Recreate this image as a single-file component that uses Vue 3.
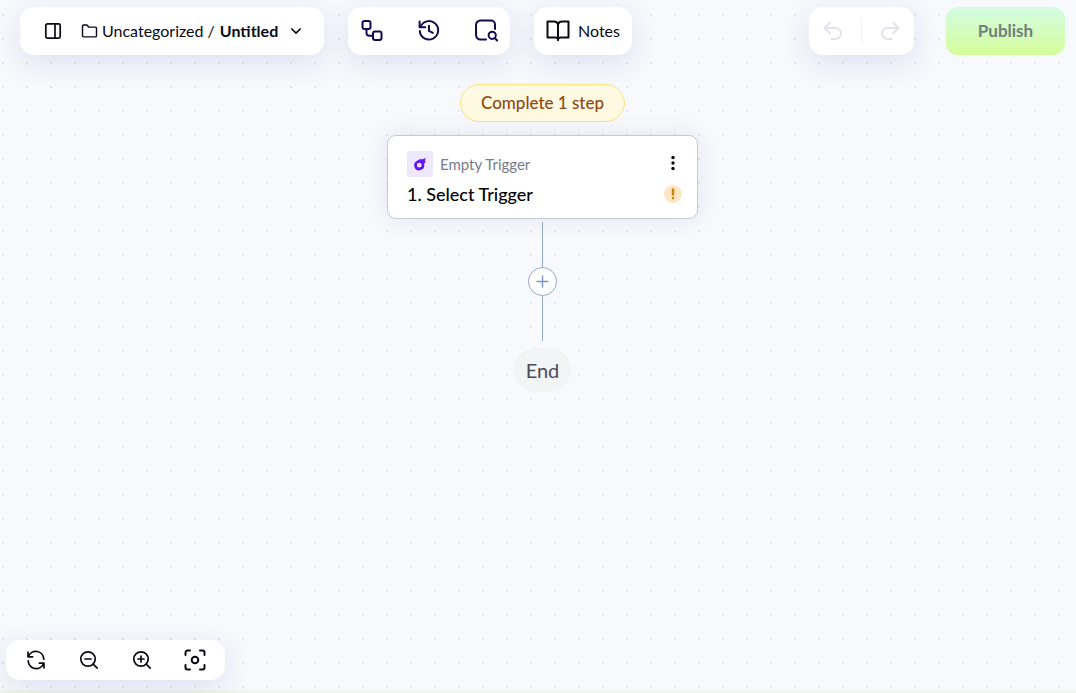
<script setup>
import { ref } from 'vue'

const folder = ref('Uncategorized')
const flowName = ref('Untitled')
const incompleteSteps = ref(1)
const trigger = ref({ piece: 'Empty Trigger', name: 'Select Trigger', valid: false })
</script>

<template>
  <div class="builder">
    <header class="top-bar">
      <nav class="panel breadcrumb">
        <button class="icon-button" aria-label="Toggle sidebar">
          <svg width="18" height="18" viewBox="0 0 18 18">
            <rect x="1.8" y="1.8" width="14.4" height="14.4" rx="1.6" />
            <path d="M11 2v14" />
          </svg>
        </button>
        <a href="#" class="folder">
          <svg width="17" height="16" viewBox="0 0 17 16">
            <path d="M1.5 12.7V3.2c0-.7.5-1.2 1.2-1.2h2.9c.4 0 .7.2.9.5l1.1 1.6h6.7c.7 0 1.2.5 1.2 1.2v7.4c0 .7-.5 1.2-1.2 1.2H2.7c-.7 0-1.2-.5-1.2-1.2z" />
          </svg>
          <span>{{ folder }} /</span>
        </a>
        <button class="flow-name">
          <span>{{ flowName }}</span>
          <svg width="12" height="12" viewBox="0 0 12 12"><path d="M1.8 4l4.2 4.2L10.2 4" /></svg>
        </button>
      </nav>

      <div class="panel tools">
        <button class="icon-button" aria-label="Data selector">
          <svg width="24" height="24" viewBox="0 0 24 24">
            <rect x="2.5" y="2" width="8" height="8" rx="2" />
            <rect x="13" y="12.5" width="8.5" height="8.5" rx="2" />
            <path d="M6.5 10v4.2a2.6 2.6 0 0 0 2.6 2.6H13" />
          </svg>
        </button>
        <button class="icon-button" aria-label="Version history">
          <svg width="24" height="24" viewBox="0 0 24 24">
            <path d="M3.4 8A9.2 9.2 0 1 1 2.8 12.1" />
            <path d="M2.6 2.5v5.700h5.700" />
            <path d="M12 6.7v5.200l3.800 2" />
          </svg>
        </button>
        <button class="icon-button" aria-label="Run logs">
          <svg width="24" height="24" viewBox="0 0 24 24">
            <path d="M12 20.500H6.500A4.500 4.500 0 0 1 2 16V6A4.500 4.500 0 0 1 6.500 1.500H17a4 4 0 0 1 4 4v4.500" />
            <circle cx="18.200" cy="16.300" r="3.600" />
            <path d="M20.800 19l2.300 2.500" />
          </svg>
        </button>
      </div>

      <button class="panel notes">
        <svg width="24" height="24" viewBox="0 0 24 24">
          <path d="M12 5.4C11.3 3.5 9.8 2.6 8 2.6H1.5v15.8h7.8c1.5 0 2.7.9 2.7 2.3 0-1.4 1.200-2.300 2.700-2.300h7.800V2.600H16c-1.800 0-3.300.9-4 2.800zM12 5.400v15.800" />
        </svg>
        <span>Notes</span>
      </button>

      <div class="panel history">
        <button class="icon-button" aria-label="Undo" disabled>
          <svg width="20" height="20" viewBox="0 0 20 20">
            <path d="M6.8 1.800L1.500 7l5.300 5.200M1.800 7h10.800a5.400 5.400 0 0 1 0 10.900H8.500" />
          </svg>
        </button>
        <span class="divider"></span>
        <button class="icon-button" aria-label="Redo" disabled>
          <svg width="20" height="20" viewBox="0 0 20 20">
            <path d="M13.200 1.800L18.500 7l-5.300 5.200M18.200 7H7.400a5.400 5.400 0 0 0 0 10.900h4.100" />
          </svg>
        </button>
      </div>

      <button class="publish" disabled>Publish</button>
    </header>

    <main class="flow">
      <button class="incomplete">Complete {{ incompleteSteps }} step</button>

      <section class="step">
        <div class="step-row">
          <span class="piece-logo">
            <svg width="14" height="14" viewBox="0 0 14 14">
              <path
                fill-rule="evenodd"
                d="M12.800 1L11.800 4l1-.2-1.700 3.400A5 5 0 1 1 4 3.800L8.600 1.600l-.3 1.200zM6.200 5.700a2.400 2.400 0 1 0 .1 4.800A2.400 2.400 0 0 0 6.200 5.700z"
              />
            </svg>
          </span>
          <span class="piece-name">{{ trigger.piece }}</span>
          <button class="icon-button menu" aria-label="Step menu">
            <svg width="18" height="18" viewBox="0 0 18 18">
              <circle cx="9" cy="2.500" r="1.700" />
              <circle cx="9" cy="8" r="1.700" />
              <circle cx="9" cy="13.500" r="1.700" />
            </svg>
          </button>
        </div>
        <div class="step-row title-row">
          <h2 class="step-name">1. {{ trigger.name }}</h2>
          <svg v-if="!trigger.valid" class="warning" width="18" height="18" viewBox="0 0 18 18">
            <circle cx="9" cy="9" r="9" />
            <path d="M9 4.500v5M9 13v.1" />
          </svg>
        </div>
      </section>

      <div class="connector">
        <span class="line"></span>
        <button class="add" aria-label="Add step">
          <svg width="13" height="13" viewBox="0 0 13 13"><path d="M6.500 1v11M1 6.500h11" /></svg>
        </button>
        <span class="line"></span>
      </div>
      <div class="end">End</div>
    </main>

    <footer class="bottom-bar">
      <div class="panel zoom">
        <button class="icon-button" aria-label="Reset view">
          <svg width="20" height="20" viewBox="0 0 20 20">
            <path d="M2 2.200v4.600h4.600M2.300 6.600A8 8 0 0 1 17.800 9.200M18 17.800v-4.600h-4.600M17.700 13.400A8 8 0 0 1 2.200 10.800" />
          </svg>
        </button>
        <button class="icon-button" aria-label="Zoom out">
          <svg width="20" height="20" viewBox="0 0 20 20">
            <circle cx="9" cy="9" r="7.200" />
            <path d="M14.200 14.200l4 4M6 9h6" />
          </svg>
        </button>
        <button class="icon-button" aria-label="Zoom in">
          <svg width="20" height="20" viewBox="0 0 20 20">
            <circle cx="9" cy="9" r="7.200" />
            <path d="M14.200 14.200l4 4M6 9h6M9 6v6" />
          </svg>
        </button>
        <button class="icon-button" aria-label="Fit to screen">
          <svg class="fit" width="24" height="24" viewBox="0 0 24 24">
            <circle cx="12" cy="12" r="3.300" />
            <path d="M2.500 7V4.500a2 2 0 0 1 2-2H7M17 2.500h2.500a2 2 0 0 1 2 2V7M21.500 17v2.500a2 2 0 0 1-2 2H17M7 21.500H4.500a2 2 0 0 1-2-2V17" />
          </svg>
        </button>
      </div>
    </footer>
  </div>
</template>

<style>
body {
  margin: 0;
}
</style>

<style scoped>
.builder {
  box-sizing: border-box;
  min-height: 100vh;
  display: flex;
  flex-direction: column;
  background-color: #f8f9fd;
  background-image: radial-gradient(circle, #e6e7eb 1px, transparent 1px);
  background-size: 24px 24px;
  background-position: -9px 3px;
  border-bottom: 3px solid #f0f6ea;
  color: #0a0a14;
  font-family: Lato, 'Open Sans', sans-serif;
  font-size: 16px;
  line-height: 24px;
}
button {
  margin: 0;
  padding: 0;
  border: none;
  background: none;
  color: inherit;
  font: inherit;
  cursor: pointer;
}
button:disabled {
  cursor: default;
}
svg {
  display: block;
  flex: none;
  fill: none;
  stroke: currentColor;
  stroke-width: 1.7;
  stroke-linecap: round;
  stroke-linejoin: round;
}
.icon-button {
  display: flex;
  align-items: center;
  justify-content: center;
}

/* top bar */
.top-bar {
  display: flex;
  gap: 24px;
  padding: 7px 11px 0 20px;
}
.panel {
  box-sizing: border-box;
  height: 48px;
  display: flex;
  align-items: center;
  background: #fff;
  border-radius: 14px;
  box-shadow: 0 8px 28px rgba(40, 45, 130, 0.12);
}
.breadcrumb {
  width: 304px;
  padding-left: 24px;
}
.folder {
  display: flex;
  align-items: center;
  gap: 4px;
  margin: 0 5px 0 19px;
  color: inherit;
  text-decoration: none;
}
.folder svg {
  stroke-width: 1.4;
}
.flow-name {
  display: flex;
  align-items: center;
  gap: 12px;
  font-weight: 700;
}
.tools {
  width: 162px;
  padding: 0 12px;
  justify-content: space-between;
  color: #160a50;
}
.tools svg {
  stroke-width: 2;
}
.notes {
  padding: 0 12px;
  gap: 8px;
}
.notes svg {
  stroke-width: 2;
}
.history {
  width: 105px;
  margin-left: auto;
  padding: 0 14px;
  justify-content: space-between;
  color: #e0e3e7;
}
.history svg {
  stroke-width: 2;
}
.divider {
  width: 1px;
  height: 24px;
  background: #eff0f3;
}
.publish {
  width: 119px;
  height: 48px;
  margin-left: 8px;
  border-radius: 12px;
  background: linear-gradient(#d3fce3, #d6fd9a);
  color: #71807f;
  font-size: 17px;
  font-weight: 700;
}

/* flow canvas */
.flow {
  flex: 1;
  display: flex;
  flex-direction: column;
  align-items: center;
  padding: 29px 0 0 9px;
}
.incomplete {
  box-sizing: border-box;
  height: 38px;
  padding: 0 20px;
  border: 1px solid #fce08a;
  border-radius: 19px;
  background: #fef9e1;
  color: #8f4a14;
  font-size: 17px;
  font-weight: 500;
}
.step {
  box-sizing: border-box;
  width: 311px;
  margin-top: 13px;
  padding: 15px 15px 12px 19px;
  border: 1px solid #c5cad6;
  border-radius: 9px;
  background: #fff;
  box-shadow: 0 0 24px rgba(30, 35, 70, 0.09);
}
.step-row {
  display: flex;
  align-items: center;
  justify-content: space-between;
}
.title-row {
  margin-top: 5px;
}
.piece-logo {
  width: 26px;
  height: 26px;
  display: flex;
  align-items: center;
  justify-content: center;
  border-radius: 2px;
  background: #eee8fc;
}
.piece-logo svg {
  fill: #6514f5;
  stroke: none;
}
.piece-name {
  flex: 1;
  margin-left: 7px;
  color: #787b8b;
  font-size: 15px;
}
.menu svg {
  fill: #0a0a14;
  stroke: none;
}
.step-name {
  margin: 0;
  color: #000;
  font-size: 18px;
  font-weight: 500;
}
.warning {
  stroke: #d0850c;
  stroke-width: 2.6;
}
.warning circle {
  fill: #fee6c5;
  stroke: none;
}
.connector {
  display: flex;
  flex-direction: column;
  align-items: center;
  margin: 3px 0 7px;
}
.line {
  width: 1px;
  height: 45px;
  background: #95a9ca;
}
.add {
  box-sizing: border-box;
  width: 29px;
  height: 29px;
  display: flex;
  align-items: center;
  justify-content: center;
  border: 1px solid #95a9ca;
  border-radius: 50%;
  background: #fff;
  color: #7e96bb;
}
.add svg {
  stroke-width: 1.5;
}
.end {
  padding: 10px 12px;
  border-radius: 22px;
  background: #f3f4f6;
  color: #4b4d59;
  font-size: 20px;
}

/* view controls */
.bottom-bar {
  padding: 0 6px 10px;
}
.zoom {
  width: 219px;
  height: 40px;
  padding: 0 18px;
  justify-content: space-between;
}
.zoom .icon-button {
  width: 24px;
}
.zoom .fit {
  stroke-width: 2;
}
</style>
